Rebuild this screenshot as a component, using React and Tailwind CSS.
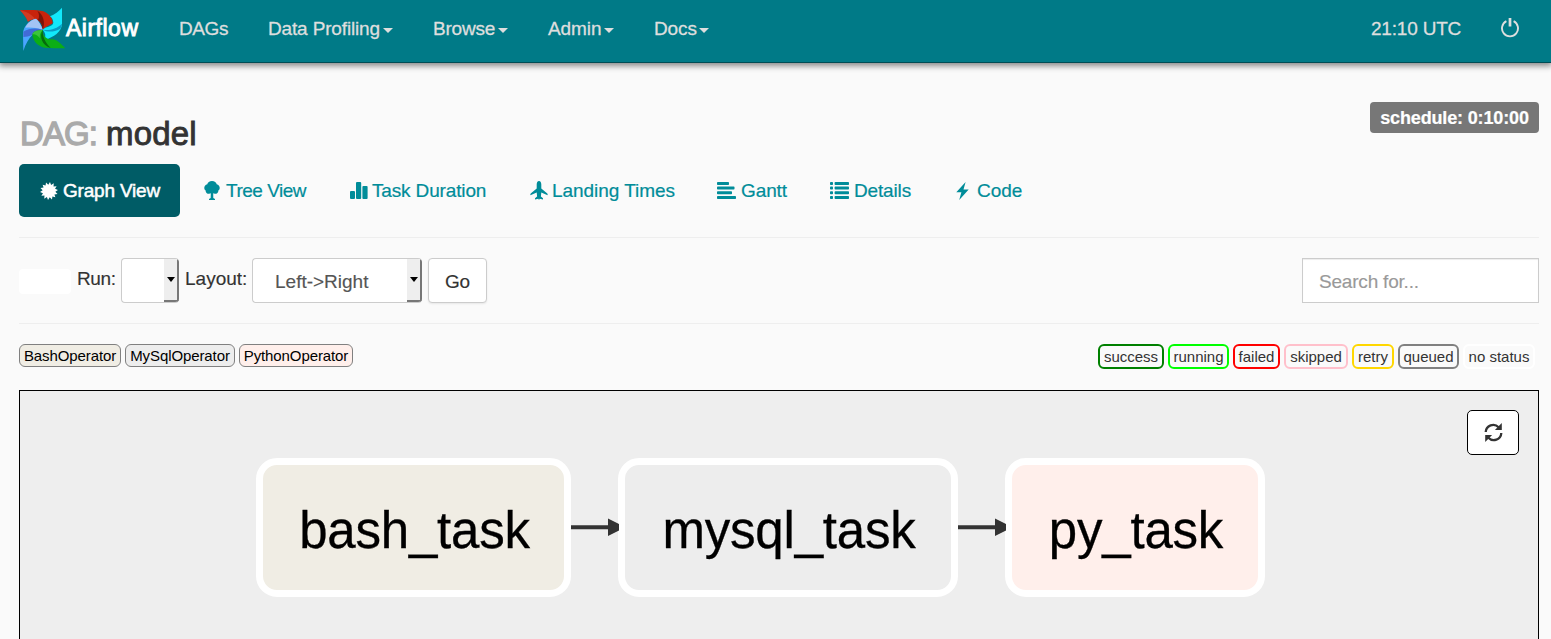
import React from "react";

function Logo() {
  return (
    <svg className="h-11 w-[46px] shrink-0" viewBox="60 20 138 132">
      <path d="M60 30C85 29 112 28 130 33C148 40 158 54 158 69C147 76 136 80 128 88C128 74 120 60 106 57C97 56 90 60 84 64C78 50 70 40 60 30Z" fill="#c8230c" />
      <path d="M60 30C78 34 96 42 106 57C97 56 90 60 84 64C78 50 70 40 60 30Z" fill="#d23a22" />
      <path d="M112 31C130 42 137 67 128 88C128 76 122 64 114 59C119 50 118 40 112 31Z" fill="#7a1409" />
      <path d="M186 22L186 72C184 94 162 112 134 118C138 106 136 96 128 88C136 78 158 80 160 67C159 57 155 51 150 48C164 42 177 33 186 22Z" fill="#12e8fa" />
      <path d="M128 88C145 92 170 86 186 70C185 77 183 82 180 86C160 96 142 96 128 88Z" fill="#0a9cc4" />
      <path d="M70 152L69 100C70 78 86 60 108 55C116 62 124 74 128 88C114 91 101 93 97 104C87 114 77 130 70 152Z" fill="#4aa5ff" />
      <path d="M76 82C82 68 94 58 108 55C116 62 124 74 128 88C110 83 94 80 76 82Z" fill="#a3c4f5" />
      <path d="M70 94C88 83 106 82 128 88C112 91 101 93 97 104C88 108 78 110 70 110Z" fill="#416bd6" />
      <path d="M196 144C174 143 152 144 134 142C112 138 99 122 97 102C102 90 116 90 128 88C126 104 137 116 152 117C167 116 175 122 196 144Z" fill="#0cae14" />
      <path d="M128 88C126 108 137 127 152 143C126 134 117 110 128 88Z" fill="#056b0c" />
      <path d="M97 102C102 90 116 90 128 88C120 98 118 106 120 114C112 104 105 100 97 102Z" fill="#3cc43a" />
    </svg>
  );
}

const Burst = () => (
  <svg className="size-[18px] shrink-0" viewBox="0 0 18 18" fill="currentColor">
    <polygon
      points={Array.from({ length: 28 }, (_, i) => {
        const r = i % 2 ? 6.4 : 9;
        const a = (i * Math.PI) / 14 - Math.PI / 2 + 0.11;
        return `${(9 + r * Math.cos(a)).toFixed(2)},${(9 + r * Math.sin(a)).toFixed(2)}`;
      }).join(" ")}
    />
  </svg>
);
const Tree = () => (
  <svg className="h-[19px] w-4 shrink-0" viewBox="0 0 16 19" fill="currentColor">
    <path d="M8 0C10.5 0 12.4 1.4 12.7 3.2C14.6 3.7 16 5.4 15.7 7.2C15.6 8.4 15 9 14.4 9.4C14.5 11.4 13 12.8 11 12.8C10.2 12.8 9.6 12.6 9.2 12.3L9.3 17L11 18V19H5V18L6.700 17L6.800 12.300C6.400 12.600 5.800 12.800 5 12.800C3 12.800 1.500 11.400 1.600 9.400C1 9 .4 8.400 .3 7.200C0 5.400 1.400 3.700 3.300 3.200C3.600 1.400 5.500 0 8 0Z" />
  </svg>
);
const Bars = () => (
  <svg className="h-[17px] w-[18px] shrink-0" viewBox="0 0 18 17" fill="currentColor">
    <rect y="9" width="5" height="8" rx="1" />
    <rect x="6" width="5.200" height="17" rx="1" />
    <rect x="12.400" y="4" width="5.200" height="13" rx="1" />
  </svg>
);
const Plane = () => (
  <svg className="h-[19px] w-[18px] shrink-0" viewBox="0 0 18 19" fill="currentColor">
    <path d="M9 0C10.500 0 11.300 1.800 11.300 3.600V7.600L17.300 12.600C17.700 13 17.700 13.500 17.600 14.300L11.300 11.500L10.900 15.400L13 17.300V18.600L9.700 17.800L9 19L8.300 17.800L5 18.600V17.300L7.100 15.400L6.700 11.500L.4 14.300C.3 13.500 .3 13 .7 12.600L6.700 7.600V3.600C6.700 1.800 7.500 0 9 0Z" />
  </svg>
);
const AlignLeft = () => (
  <svg className="h-[17px] w-[19px] shrink-0" viewBox="0 0 19 17" fill="currentColor">
    <rect width="12" height="3" rx=".8" />
    <rect y="4.600" width="17.500" height="3" rx=".8" />
    <rect y="9.300" width="15" height="3" rx=".8" />
    <rect y="14" width="19" height="3" rx=".8" />
  </svg>
);
const List = () => (
  <svg className="h-[17px] w-[19px] shrink-0" viewBox="0 0 19 17" fill="currentColor">
    {[0, 4.6, 9.3, 14].map((y) => (
      <g key={y}>
        <rect y={y} width="3" height="3" rx=".8" />
        <rect x="4.600" y={y} width="14.400" height="3" rx=".8" />
      </g>
    ))}
  </svg>
);
const Flash = () => (
  <svg className="h-[18px] w-[13px] shrink-0" viewBox="0 0 13 18" fill="currentColor">
    <path d="M9.600 0L.3 10.200H5.400L3.200 18L12.700 7.400H7.500Z" />
  </svg>
);
const Power = () => (
  <svg className="h-5 w-[18px]" viewBox="0 0 18 20" fill="none" stroke="currentColor">
    <path d="M5.400 3.200A8 8 0 1 0 12.600 3.200" strokeWidth="1.900" />
    <path d="M9 0V8.500" strokeWidth="2.700" />
  </svg>
);
const Refresh = () => (
  <svg className="h-[19px] w-[19px]" viewBox="0 0 19 19">
    <g fill="none" stroke="#333" strokeWidth="2.300">
      <path d="M1.700 9A7.500 7.500 0 0 1 14.600 4.200" />
      <path d="M17.300 10A7.500 7.500 0 0 1 4.400 14.800" />
    </g>
    <path d="M17.800 0V6.900H10.900ZM1.200 19V12.100H8.100Z" fill="#333" />
  </svg>
);

const Caret = () => (
  <span className="mt-[3px] border-x-[5px] border-t-[5px] border-x-transparent border-t-[#dedede]" />
);

const menus = [
  { label: "DAGs", box: "ml-[39px] w-[50px] tracking-[-0.4px]", caret: false },
  { label: "Data Profiling", box: "ml-[39px] w-[115px] tracking-[-0.15px]", caret: true },
  { label: "Browse", box: "ml-[40px] w-[65px] tracking-[-0.2px]", caret: true },
  { label: "Admin", box: "ml-[40px] w-[56px] tracking-[-0.1px]", caret: true },
  { label: "Docs", box: "ml-[40px] w-[45px] tracking-[-0.1px]", caret: true },
];

const tabs = [
  { label: "Tree View", Icon: Tree, box: "ml-[24px] w-[102px] gap-[6px]", track: "tracking-[-0.5px]" },
  { label: "Task Duration", Icon: Bars, box: "ml-[44px] w-[136px] gap-[4px]", track: "tracking-[-0.15px]" },
  { label: "Landing Times", Icon: Plane, box: "ml-[44px] w-[145px] gap-[4px]", track: "tracking-[-0.05px]" },
  { label: "Gantt", Icon: AlignLeft, box: "ml-[42px] w-[71px] gap-[5px]", track: "tracking-[-0.1px]" },
  { label: "Details", Icon: List, box: "ml-[42px] w-[81px] gap-[5px]", track: "tracking-[-0.15px]" },
  { label: "Code", Icon: Flash, box: "ml-[45px] w-[67px] gap-[8px]", track: "tracking-[0px]" },
];

const operators = [
  { label: "BashOperator", box: "w-[102px] bg-[#f0ede4]" },
  { label: "MySqlOperator", box: "w-[110px] bg-[#ededed]" },
  { label: "PythonOperator", box: "w-[114px] bg-[#ffefeb]" },
];

const states = [
  { label: "success", box: "w-[66px] border-[#008000]" },
  { label: "running", box: "w-[61px] border-[#00ff00]" },
  { label: "failed", box: "w-[47px] border-[#ff0000]" },
  { label: "skipped", box: "w-[64px] border-[#ffc0cb]" },
  { label: "retry", box: "w-[42px] border-[#ffd700]" },
  { label: "queued", box: "w-[61px] border-[#808080]" },
  { label: "no status", box: "w-[72px] border-white" },
];

const nodes = [
  { label: "bash_task", box: "left-[236px] w-[315px] bg-[#f0ede4]" },
  { label: "mysql_task", box: "left-[598px] w-[340px] bg-[#ededed]" },
  { label: "py_task", box: "left-[985px] w-[260px] bg-[#ffefeb]" },
];

function Arrow({ place }) {
  return (
    <svg className={`absolute top-[127px] h-[18px] w-12 ${place}`} viewBox="0 0 48 18">
      <path d="M0 9.300H38" stroke="#333" strokeWidth="4" />
      <path d="M37 .5L48 6V12.500L37 18Z" fill="#333" />
    </svg>
  );
}

function Select({ className, children }) {
  return (
    <div className={`flex h-[45px] overflow-hidden rounded border border-[#ccc] border-r-0 bg-white ${className}`}>
      <span className="flex-1 pt-[9px] pl-[22px] text-[#555]">{children}</span>
      <span className="flex w-[15px] items-center justify-center border-r-2 border-b-2 border-[#777] bg-[#eee]">
        <span className="border-x-[4px] border-t-[5px] border-x-transparent border-t-black" />
      </span>
    </div>
  );
}

export default function App() {
  return (
    <div className="flex h-[639px] w-[1551px] flex-col overflow-hidden bg-[#fafafa] font-['Liberation_Sans',Arial,sans-serif] text-[19px] leading-[27px] whitespace-nowrap text-[#333]">
      <nav className="flex h-[63px] shrink-0 items-center border-b border-[#004d55] bg-[#007a87] pr-[32px] pb-[5px] pl-5 text-[#dedede] shadow-[0_2px_6px_1px_rgba(0,0,0,0.45)] [-webkit-text-stroke:0.3px]">
        <Logo />
        <span className="w-[74px] text-[23px] tracking-[0.5px] text-white [-webkit-text-stroke:0.9px]">Airflow</span>
        {menus.map((m) => (
          <div key={m.label} className="flex items-center">
            <span className={m.box}>{m.label}</span>
            {m.caret && <Caret />}
          </div>
        ))}
        <span className="ml-auto w-[91px] tracking-[-0.2px]">21:10 UTC</span>
        <span className="mb-px ml-[39px]"><Power /></span>
      </nav>

      <main className="flex min-h-0 flex-1 flex-col px-[19px] pr-[12px]">
        <header className="flex h-[101px] shrink-0 justify-between">
          <h1 className="flex pt-[51px] pl-px text-[33px] leading-10 [-webkit-text-stroke:0.9px]">
            <span className="w-[86px] tracking-[-0.9px] text-[#aaa] [-webkit-text-stroke:1.3px]">DAG:</span>
            <span className="tracking-[0.2px]">model</span>
          </h1>
          <span className="mt-[39px] flex h-[31px] w-[169px] items-center justify-center rounded bg-[#777] pt-px text-[18px] font-bold tracking-[-0.15px] text-white [-webkit-text-stroke:0.2px]">
            schedule: 0:10:00
          </span>
        </header>

        <div className="flex h-[74px] shrink-0 border-b border-[#eee] text-[#008c99]">
          <div className="flex h-[53px] w-[161px] items-center gap-[5px] rounded-[5px] bg-[#005c66] pl-[21px] text-white [-webkit-text-stroke:0.5px]">
            <Burst />
            <span className="tracking-[-0.2px]">Graph View</span>
          </div>
          {tabs.map(({ label, Icon, box, track }) => (
            <div key={label} className={`flex h-[53px] items-center [-webkit-text-stroke:0.2px] ${box}`}>
              <Icon />
              <span className={track}>{label}</span>
            </div>
          ))}
        </div>

        <div className="flex h-[86px] shrink-0 items-start border-b border-[#eee] pt-[20px] [-webkit-text-stroke:0.15px]">
          <span className="mt-[11px] h-[25px] w-[52px] rounded bg-white" />
          <span className="mt-[7px] ml-[6px] w-[44px] tracking-[-0.4px]">Run:</span>
          <Select className="w-[58px]" />
          <span className="mt-[7px] ml-[6px] w-[67px]">Layout:</span>
          <Select className="w-[170px]">Left-&gt;Right</Select>
          <span className="ml-[6px] flex h-[45px] w-[59px] items-center justify-center rounded border border-[#ccc] bg-white pt-px tracking-[-0.2px] shadow-[0_1px_2px_rgba(0,0,0,0.08)]">
            Go
          </span>
          <span className="ml-auto flex h-[45px] w-[237px] items-center border border-[#ccc] bg-white pt-px pl-4 tracking-[-0.2px] text-[#999] shadow-[inset_0_1px_1px_rgba(0,0,0,0.075)]">
            Search for...
          </span>
        </div>

        <div className="flex h-[66px] shrink-0 justify-between pt-[20px] pr-1 text-[15px] leading-none">
          <div className="flex gap-1 text-black">
            {operators.map((o) => (
              <span key={o.label} className={`flex h-[23px] items-center justify-center rounded-[6px] border border-[#808080] tracking-[-0.1px] ${o.box}`}>
                {o.label}
              </span>
            ))}
          </div>
          <div className="flex gap-1">
            {states.map((s) => (
              <span key={s.label} className={`flex h-[25px] items-center justify-center rounded-[6px] border-2 ${s.box}`}>
                {s.label}
              </span>
            ))}
          </div>
        </div>

        <section className="relative min-h-0 flex-1 border border-b-0 border-black bg-[#eee]">
          {nodes.map((n) => (
            <div key={n.label} className={`absolute top-[67px] flex h-[139px] items-center justify-center rounded-[21px] border-[7px] border-white pt-[5px] pl-[2px] text-[51px] leading-none tracking-[-0.2px] text-black [-webkit-text-stroke:0.3px] ${n.box}`}>
              {n.label}
            </div>
          ))}
          <Arrow place="left-[551px]" />
          <Arrow place="left-[938px]" />
          <div className="absolute top-[19px] right-[19px] flex h-[45px] w-[52px] items-center justify-center rounded-[5px] border border-black bg-white">
            <Refresh />
          </div>
        </section>
      </main>
    </div>
  );
}
